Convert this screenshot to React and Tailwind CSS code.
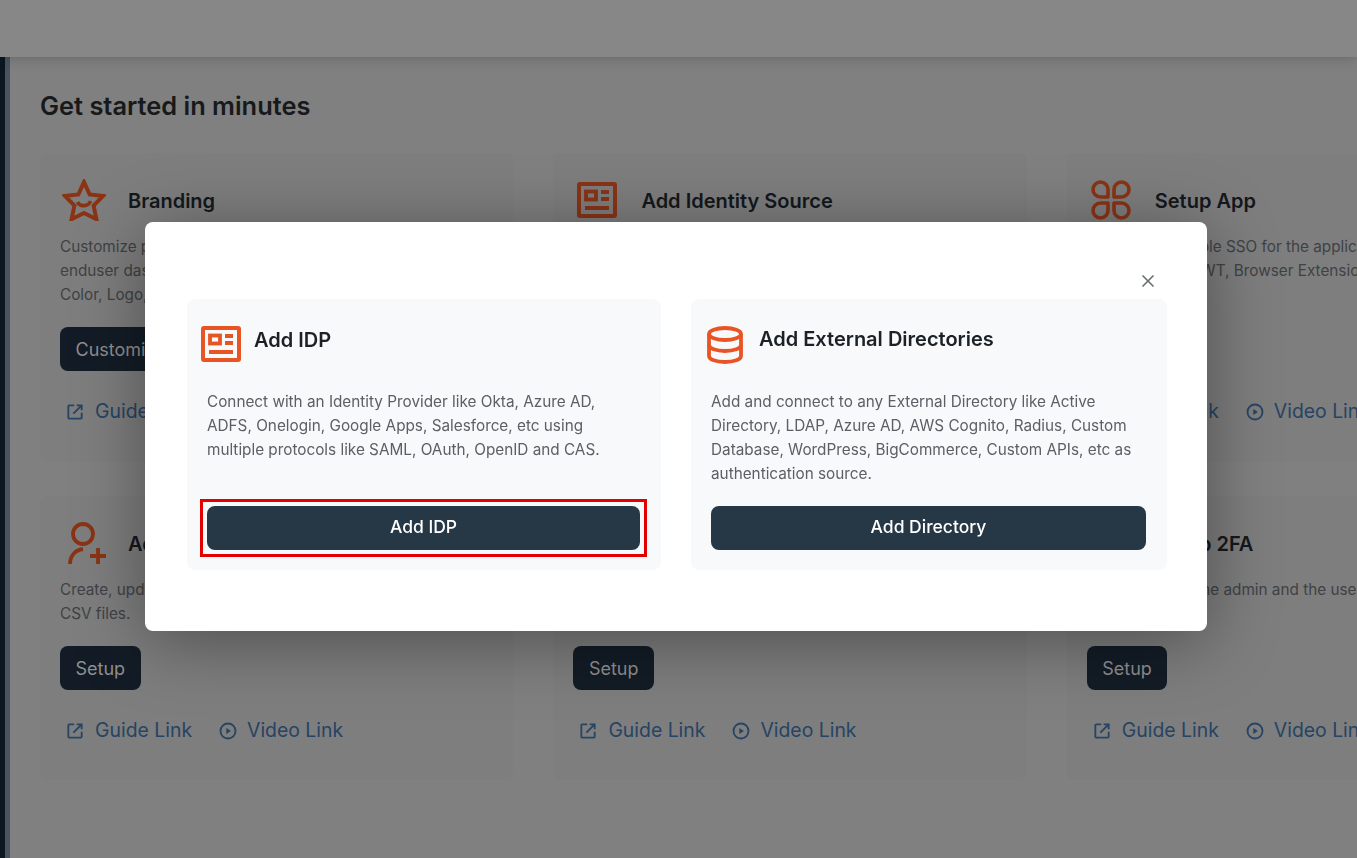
import React from 'react';
import { X } from 'lucide-react';

const font = { fontFamily: 'Inter' };

const NewsIcon = ({ className }) => (
  <svg viewBox="0 0 40 36" className={className} fill="none" stroke="currentColor">
    <rect x="2" y="2" width="36" height="32" rx="1" strokeWidth="4" />
    <rect x="9" y="9.5" width="10" height="8" strokeWidth="3.8" />
    <path d="M24 10h8M24 17h8M8 26h24" strokeWidth="3.8" />
  </svg>
);

const StarIcon = ({ className }) => (
  <svg viewBox="0 0 44 42" className={className} fill="none" stroke="currentColor" strokeWidth="4">
    <path d="M22 3l5.600 12.400 13.400 1.600-9.400 9.600 2.800 13.600L22 34l-12.400 6.200 2.800-13.600L3 17l13.400-1.600z" />
    <path d="M15.500 23c2 5 11 5 13-1" strokeWidth="3.6" />
  </svg>
);

const PetalsIcon = ({ className }) => (
  <svg viewBox="0 0 40 40" className={className} fill="none" stroke="currentColor" strokeWidth="3.6" strokeLinejoin="round">
    <path d="M17 17H9.500A7.500 7.500 0 1 1 17 9.500z" />
    <path d="M23 17h7.500A7.500 7.500 0 1 0 23 9.500z" />
    <path d="M17 23H9.500A7.500 7.500 0 1 0 17 30.500z" />
    <path d="M23 23h7.500A7.500 7.500 0 1 1 23 30.500z" />
  </svg>
);

const UserPlusIcon = ({ className }) => (
  <svg viewBox="0 0 44 44" className={className} fill="none" stroke="currentColor" strokeWidth="3.8">
    <circle cx="21" cy="13" r="10" />
    <path d="M8 43c0-8 5-14 13-15" />
    <path d="M36 27v16M28 35h16" />
  </svg>
);

const KeyIcon = ({ className }) => (
  <svg viewBox="0 0 44 44" className={className} fill="none" stroke="currentColor" strokeWidth="3.6">
    <circle cx="22" cy="22" r="18" />
  </svg>
);

const DatabaseIcon = ({ className }) => (
  <svg viewBox="0 0 36 38" className={className} fill="none" stroke="currentColor" strokeWidth="3.8">
    <ellipse cx="18" cy="8" rx="16" ry="6" />
    <path d="M2 8v22c0 3.500 7 6 16 6s16-2.500 16-6V8" />
    <path d="M2 19c0 3.500 7 6 16 6s16-2.500 16-6" />
  </svg>
);

const GuideIcon = () => (
  <svg viewBox="0 0 24 24" className="w-5 h-5 shrink-0" fill="none" stroke="currentColor" strokeWidth="2.200">
    <path d="M11 4H5a1 1 0 0 0-1 1v14a1 1 0 0 0 1 1h14a1 1 0 0 0 1-1v-6" />
    <path d="M14 4h6v6M20 4L10 14" />
  </svg>
);

const VideoIcon = () => (
  <svg viewBox="0 0 24 24" className="w-5 h-5 shrink-0" fill="none" stroke="currentColor" strokeWidth="2.200">
    <circle cx="12" cy="12" r="9" />
    <path d="M10 8.500l5.500 3.500-5.500 3.500z" fill="currentColor" stroke="none" />
  </svg>
);

const rowOne = [
  {
    icon: StarIcon,
    iconClass: 'w-[44px] h-[42px]',
    title: 'Branding',
    lines: ['Customize portal branding to match your', 'enduser dashboard and login page with', 'Color, Logo, Favicon and Custom CSS.'],
    button: 'Customize',
  },
  {
    icon: NewsIcon,
    iconClass: 'w-[40px] h-[36px]',
    title: 'Add Identity Source',
    lines: ['Connect an Identity Provider or an external', 'directory as the source of your users and', 'let them sign in with existing accounts.'],
    button: 'Setup',
  },
  {
    icon: PetalsIcon,
    iconClass: 'w-[42px] h-[40px]',
    title: 'Setup App',
    lines: ['Seamlessly enable SSO for the applications', 'SAML, OAuth, JWT, Browser Extension', 'and more.'],
    button: 'Setup',
  },
];

const rowTwo = [
  {
    icon: UserPlusIcon,
    iconClass: 'w-[44px] h-[44px]',
    title: 'Add Users',
    lines: ['Create, update and manage users manually or import them from', 'CSV files.'],
    button: 'Setup',
  },
  {
    icon: KeyIcon,
    iconClass: 'w-[44px] h-[44px]',
    title: 'Setup Policies',
    lines: ['Create login policies for your applications', 'and user groups.'],
    button: 'Setup',
  },
  {
    icon: KeyIcon,
    iconClass: 'w-[44px] h-[44px]',
    title: 'Setup 2FA',
    lines: ['Enable 2FA for the admin and the users', 'at login.'],
    button: 'Setup',
  },
];

const QuickCard = ({ item, tall }) => {
  const Icon = item.icon;
  return (
    <div className={`w-[473.4px] shrink-0 rounded-lg bg-[#7e7e7e] pl-5 pt-[25px] ${tall ? 'h-[284px]' : 'h-[308px]'}`}>
      <div className="flex items-center gap-[22px] h-[44px]">
        <div className="ml-[2px] flex w-[44px] shrink-0 justify-center">
          <Icon className={`${item.iconClass} text-[#8a3415]`} />
        </div>
        <h3 className="mt-[1px] text-[20px] font-semibold text-[#14181c] whitespace-nowrap">{item.title}</h3>
      </div>
      <div className="mt-[13px] text-[15.3px] leading-6 text-[#3f4245] whitespace-nowrap">
        {item.lines.map((l) => (
          <p key={l}>{l}</p>
        ))}
      </div>
      <button className="mt-[20px] h-[44px] rounded-lg bg-[#131c26] px-[15.500px] text-[18px] text-[#8f8f8f]">
        {item.button}
      </button>
      <div className="mt-[29px] flex h-[24px] items-center pl-[5px] text-[19.4px] text-[#264463]">
        <GuideIcon />
        <span className="ml-[10px]">Guide Link</span>
        <span className="ml-[26px]"><VideoIcon /></span>
        <span className="ml-[9px]">Video Link</span>
      </div>
    </div>
  );
};

const App = () => {
  return (
    <div className="relative h-[858px] w-full overflow-hidden bg-[#808080]" style={font}>
      <div className="relative z-10 h-[57px] bg-[#878787] shadow-[0_2px_12px_rgba(0,0,0,0.18)]" />
      <div className="flex h-[801px]">
        <div className="flex w-[10px] shrink-0">
          <div className="w-[5px] bg-[#0b1620]" />
          <div className="w-[5px] bg-[#48545e]" />
        </div>
        <main className="pl-[30px] pt-[33px]">
          <h1 className="text-[25.4px] leading-8 font-semibold text-[#17191b]">Get started in minutes</h1>
          <div className="mt-[31px] flex gap-[40px]">
            {rowOne.map((item) => (
              <QuickCard key={item.title} item={item} />
            ))}
          </div>
          <div className="mt-[35px] flex gap-[40px]">
            {rowTwo.map((item) => (
              <QuickCard key={item.title} item={item} tall />
            ))}
          </div>
        </main>
      </div>

      <div className="fixed inset-0 z-20 pl-[145px] pt-[222px]">
        <div className="relative h-[409px] w-[1062px] rounded-lg bg-white pl-[42px] pr-[40px] pt-[77px] shadow-[0_10px_70px_rgba(0,0,0,0.38)]">
          <button className="absolute right-[49px] top-[49px] text-[#6b6f72]">
            <X className="h-[20px] w-[20px]" strokeWidth={2} />
          </button>
          <div className="flex gap-[30px]">
            <div className="flex h-[271px] w-[474px] flex-col rounded-lg bg-[#f8f9fb]">
              <div className="flex items-center gap-[13px] pl-[14px] pt-[27px]">
                <NewsIcon className="h-[36px] w-[40px] text-[#e85424]" />
                <h2 className="-mt-[8px] text-[20px] font-semibold text-[#1c2126]">Add IDP</h2>
              </div>
              <div className="mt-[28px] pl-[20px] text-[15.3px] leading-6 text-[#5b6064] whitespace-nowrap">
                <p>Connect with an Identity Provider like Okta, Azure AD,</p>
                <p>ADFS, Onelogin, Google Apps, Salesforce, etc using</p>
                <p>multiple protocols like SAML, OAuth, OpenID and CAS.</p>
              </div>
              <div className="mb-[13px] ml-[13px] mt-auto w-[447px] border-[3px] border-[#e30000] p-[4px]">
                <button className="h-[44px] w-full rounded-lg bg-[#263746] pb-[1px] text-[17.500px] font-medium text-white">Add IDP</button>
              </div>
            </div>
            <div className="flex h-[271px] w-[476px] flex-col rounded-lg bg-[#f8f9fb]">
              <div className="flex items-center gap-[16px] pl-[16px] pt-[27px]">
                <DatabaseIcon className="h-[38px] w-[36px] text-[#e85424]" />
                <h2 className="-mt-[13px] text-[20px] font-semibold text-[#1c2126]">Add External Directories</h2>
              </div>
              <div className="mt-[26px] pl-[20px] text-[15.3px] leading-6 text-[#5b6064] whitespace-nowrap">
                <p>Add and connect to any External Directory like Active</p>
                <p>Directory, LDAP, Azure AD, AWS Cognito, Radius, Custom</p>
                <p>Database, WordPress, BigCommerce, Custom APIs, etc as</p>
                <p>authentication source.</p>
              </div>
              <div className="mb-[20px] mt-auto pl-[20px] pr-[21px]">
                <button className="h-[44px] w-full rounded-lg bg-[#263746] pb-[1px] text-[17.500px] font-medium text-white">Add Directory</button>
              </div>
            </div>
          </div>
        </div>
      </div>
    </div>
  );
};

export default App;
